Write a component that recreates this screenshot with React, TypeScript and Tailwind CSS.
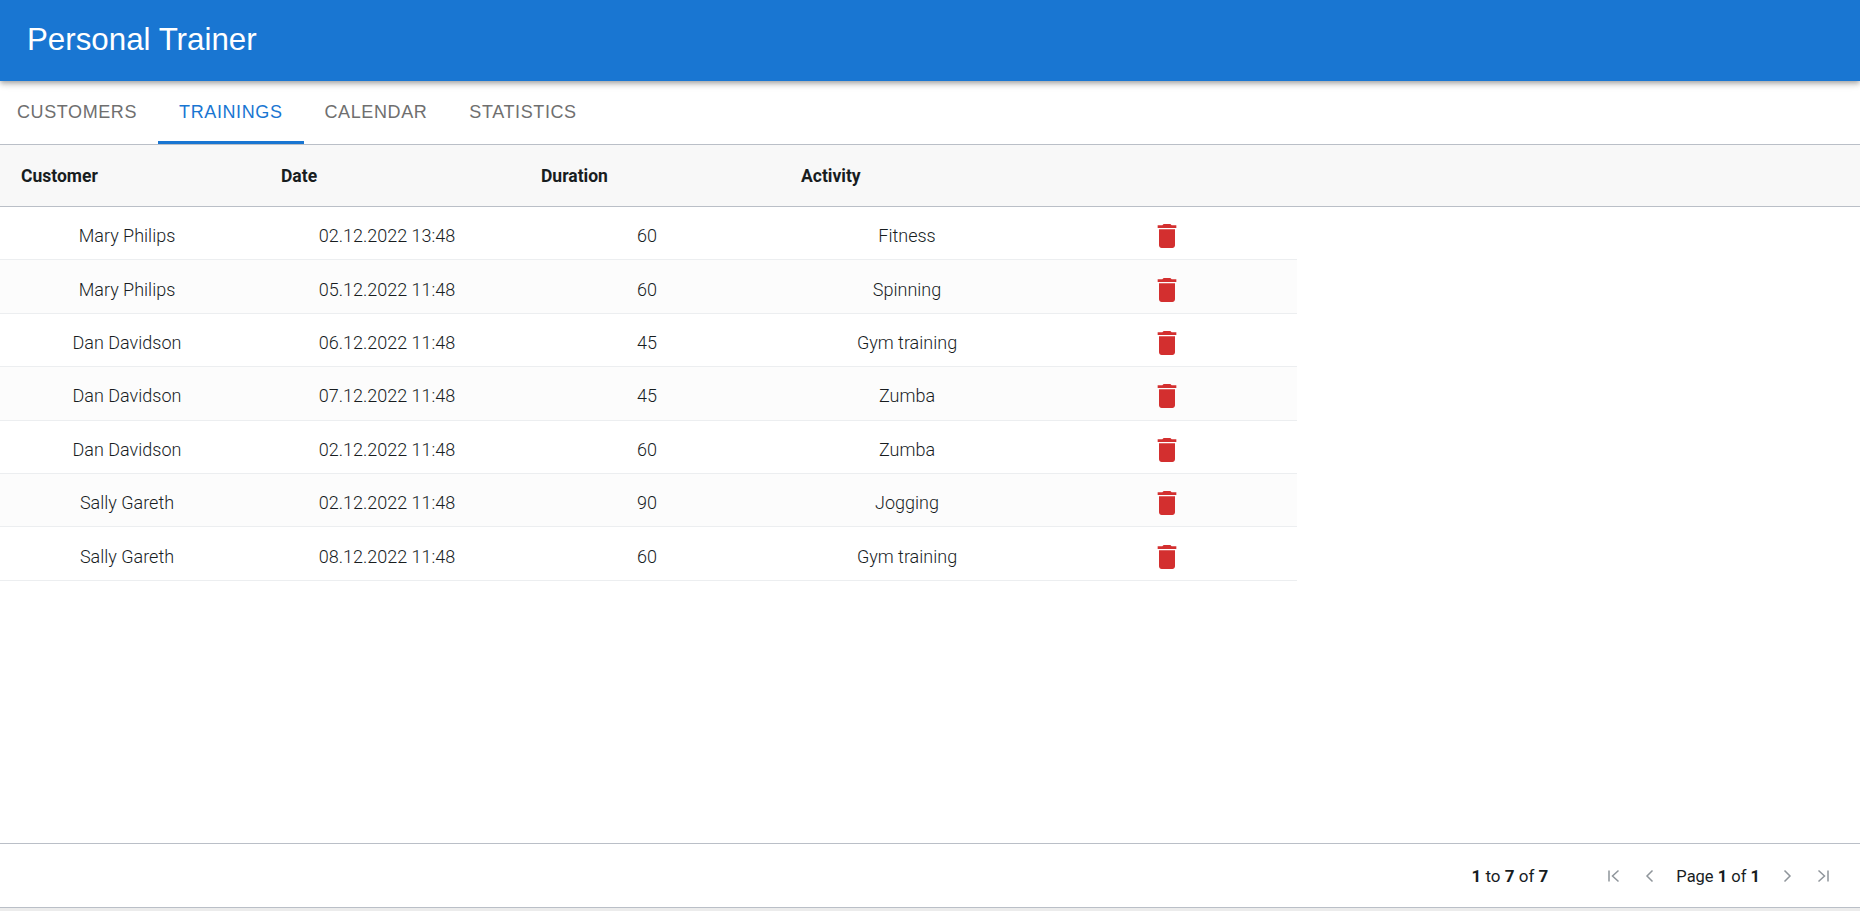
const trainings = [
  { customer: "Mary Philips", date: "02.12.2022 13:48", duration: 60, activity: "Fitness" },
  { customer: "Mary Philips", date: "05.12.2022 11:48", duration: 60, activity: "Spinning" },
  { customer: "Dan Davidson", date: "06.12.2022 11:48", duration: 45, activity: "Gym training" },
  { customer: "Dan Davidson", date: "07.12.2022 11:48", duration: 45, activity: "Zumba" },
  { customer: "Dan Davidson", date: "02.12.2022 11:48", duration: 60, activity: "Zumba" },
  { customer: "Sally Gareth", date: "02.12.2022 11:48", duration: 90, activity: "Jogging" },
  { customer: "Sally Gareth", date: "08.12.2022 11:48", duration: 60, activity: "Gym training" },
];

function TrashIcon() {
  return (
    <svg viewBox="0 0 24 24" className="h-8 w-8 fill-[#d32f2f]">
      <path d="M6 19c0 1.1.9 2 2 2h8c1.1 0 2-.9 2-2V7H6v12zM19 4h-3.5l-1-1h-5l-1 1H5v2h14V4z" />
    </svg>
  );
}

function PagerIcon({ d }: { d: string }) {
  return (
    <svg viewBox="0 0 16 16" className="h-4 w-4 fill-none stroke-[#8f959b] stroke-[1.5]">
      <path d={d} />
    </svg>
  );
}

export default function App() {
  return (
    <div className="flex h-[911px] flex-col overflow-hidden bg-white font-['Roboto',sans-serif]">
      {/* App bar */}
      <header className="relative z-10 flex h-[81px] items-center bg-[#1976d2] pb-[1px] pl-[27px] font-['Liberation_Sans',sans-serif] text-[31.3px] text-white shadow-[0_2px_4px_-1px_rgba(0,0,0,0.2),0_4px_5px_0_rgba(0,0,0,0.14),0_1px_10px_0_rgba(0,0,0,0.12)]">
        Personal Trainer
      </header>

      {/* Tabs */}
      <nav className="flex h-[63px] font-['Liberation_Sans',sans-serif] text-[18px] tracking-[0.6px] text-[#6f6f6f]">
        <div className="flex items-center pr-[21px] pl-[17px]">CUSTOMERS</div>
        <div className="flex items-center border-b-[3px] border-[#1976d2] px-[21px] pt-[3px] text-[#1976d2]">
          TRAININGS
        </div>
        <div className="flex items-center px-[21px]">CALENDAR</div>
        <div className="flex items-center px-[21px]">STATISTICS</div>
      </nav>

      {/* Grid header */}
      <div className="flex h-[63px] border-y border-[#babfc7] bg-[#f8f8f8] pt-[2px] text-[17.5px] font-bold text-[#181d1f]">
        {["Customer", "Date", "Duration", "Activity", ""].map((h, i) => (
          <div key={i} className="flex w-[260px] items-center pl-[21px]">
            {h}
          </div>
        ))}
      </div>

      {/* Grid rows */}
      <div className="flex-1 text-[18px] font-light text-[#181d1f]">
        {trainings.map((t, i) => (
          <div
            key={i}
            className={`flex h-[53.4px] w-[1297px] items-center border-b border-[#eceef0] pt-[6px] text-center ${
              i % 2 === 1 ? "bg-[#fcfcfc]" : "bg-white"
            }`}
          >
            <div className="-mt-[1px] w-[260px] pr-[6px]">{t.customer}</div>
            <div className="-mt-[1px] w-[260px] pr-[6px]">{t.date}</div>
            <div className="-mt-[1px] w-[260px] pr-[6px]">{t.duration}</div>
            <div className="-mt-[1px] w-[260px] pr-[6px]">{t.activity}</div>
            <div className="flex flex-1 justify-center pr-[3px]">
              <TrashIcon />
            </div>
          </div>
        ))}
      </div>

      {/* Pagination */}
      <footer className="flex h-[64px] items-center justify-end border-t border-[#babfc7] pt-[3px] pr-[29px] text-[17px] text-[#181d1f]">
        <span>
          <b>1</b> to <b>7</b> of <b>7</b>
        </span>
        <div className="ml-[58px] flex items-center">
          <div className="-mt-[3px]">
            <PagerIcon d="M3 2.5v11M12.5 2.5L6.5 8l6 5.5" />
          </div>
          <div className="-mt-[3px] ml-[20px]">
            <PagerIcon d="M10.5 2.5L5 8l5.5 5.5" />
          </div>
          <span className="mr-[19px] ml-[18px] text-[16.5px]">
            Page <b>1</b> of <b>1</b>
          </span>
          <div className="-mt-[3px]">
            <PagerIcon d="M5.5 2.5L11 8l-5.5 5.5" />
          </div>
          <div className="-mt-[3px] ml-[20px]">
            <PagerIcon d="M13 2.5v11M3.5 2.5l6 5.5-6 5.5" />
          </div>
        </div>
      </footer>
      <div className="h-[4px] border-t border-[#babfc7] bg-[#ececec]" />
    </div>
  );
}
